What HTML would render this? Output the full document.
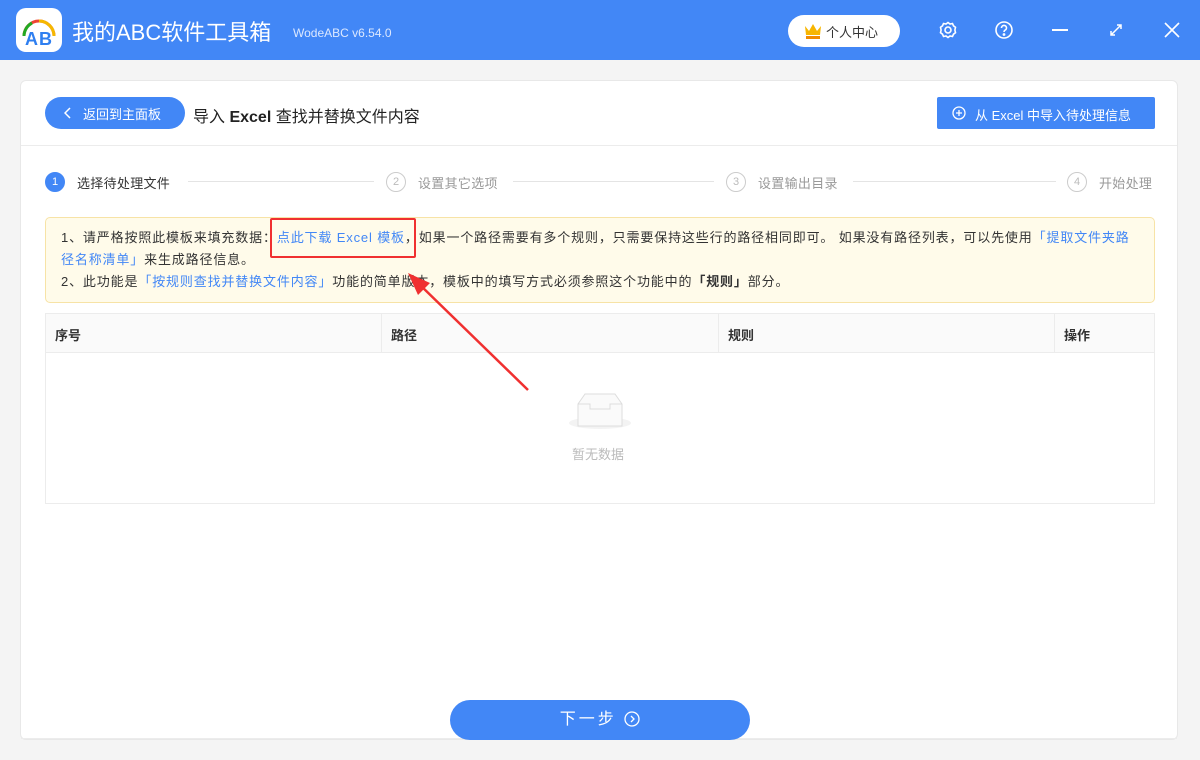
<!DOCTYPE html>
<html><head><meta charset="utf-8"><style>
*{margin:0;padding:0;box-sizing:border-box}
body{width:1200px;height:760px;overflow:hidden;background:#f4f4f4;font-family:"Liberation Sans","Noto Sans CJK SC",sans-serif;font-size:13px;color:#333;position:relative}
.top{position:absolute;left:0;top:0;width:1200px;height:60px;background:#4287f6}
.logo{position:absolute;left:16px;top:8px;width:46px;height:44px;background:#fff;border-radius:10px}
.ttl{position:absolute;left:72px;top:15px;color:#fff;font-size:22px}
.ver{position:absolute;left:293px;top:26px;color:#dce8ff;font-size:12px}
.pc{position:absolute;left:788px;top:15px;width:112px;height:32px;background:#fff;border-radius:16px;font-size:13px;color:#333;padding:7px 0 0 38px}
.card{position:absolute;left:20px;top:80px;width:1158px;height:660px;background:#fff;border:1px solid #e8e8e8;border-radius:6px}
.abs{position:absolute}
.back{left:45px;top:97px;width:140px;height:32px;background:#4287f6;border-radius:16px;color:#fff;font-size:13px;padding:7px 0 0 38px}
.imp{left:937px;top:97px;width:218px;height:32px;background:#4287f6;border-radius:2px;color:#fff;font-size:13px;padding:8px 0 0 38px}
.step{top:173px;font-size:13px;color:#999;letter-spacing:0.3px}
.circ{position:absolute;width:20px;height:20px;border-radius:50%;border:1px solid #ccc;color:#bbb;font-size:11px;text-align:center;line-height:18px;top:172px}
.ln{position:absolute;top:181px;height:1px;background:#e4e4e4}
.note{left:45px;top:217px;width:1110px;height:86px;background:#fffbea;border:1px solid #f7e3a6;border-radius:5px;padding:9px 10px 9px 15px;font-size:13px;line-height:22px;color:#333;letter-spacing:0.85px;white-space:nowrap}
.b{color:#4287f6}
.tbl{left:45px;top:313px;width:1110px;height:191px;border:1px solid #ececec}
.th{position:absolute;top:0;height:39px;background:#fafafa;border-bottom:1px solid #ececec;font-weight:bold;font-size:13px;padding:11px 9px}
</style></head><body>
<div class="top"></div>
<div class="logo"><svg width="46" height="44" viewBox="0 0 46 44"><path d="M8 28 A15 15 0 0 1 38 28" fill="none" stroke="#e43" stroke-width="3"/><path d="M23 13 A15 15 0 0 1 38 28" fill="none" stroke="#f5b800" stroke-width="3"/><path d="M8 28 A15 15 0 0 1 16 15" fill="none" stroke="#2a2" stroke-width="3"/><text x="9" y="37" font-size="18" font-weight="bold" fill="#2f7ff0" font-family="Liberation Sans">A</text><text x="23" y="37" font-size="18" font-weight="bold" fill="#2f7ff0" font-family="Liberation Sans">B</text></svg></div>
<div class="ttl">我的ABC软件工具箱</div>
<div class="ver">WodeABC v6.54.0</div>
<div class="pc"><svg class="abs" style="left:16px;top:8px" width="18" height="16" viewBox="0 0 18 16"><path d="M1 3 L5 8 L9 1 L13 8 L17 3 L16 12 L2 12Z" fill="#f7b500"/><rect x="2" y="13" width="14" height="3" fill="#f08a00"/></svg>个人中心</div>
<svg class="abs" style="left:938px;top:20px" width="20" height="20" viewBox="0 0 20 20" fill="none" stroke="#fff" stroke-width="1.6"><circle cx="10" cy="10" r="3"/><path d="M10 2.5l2 1.5 2.5-.5 1 2.3 2 1.5-.6 2.7.6 2.7-2 1.5-1 2.3-2.5-.5-2 1.5-2-1.5-2.5.5-1-2.3-2-1.5.6-2.7-.6-2.7 2-1.5 1-2.3 2.5.5z"/></svg>
<svg class="abs" style="left:994px;top:20px" width="20" height="20" viewBox="0 0 20 20" fill="none" stroke="#fff" stroke-width="1.6"><circle cx="10" cy="10" r="8"/><path d="M7.5 8a2.5 2.5 0 1 1 3.5 2.2c-.7.4-1 .9-1 1.8"/><circle cx="10" cy="14.5" r=".6" fill="#fff"/></svg>
<div class="abs" style="left:1052px;top:29px;width:16px;height:2px;background:#fff"></div>
<svg class="abs" style="left:1108px;top:22px" width="16" height="16" viewBox="0 0 16 16" stroke="#fff" stroke-width="1.5" fill="none"><path d="M3 13L13 3M9 3h4v4M3 9v4h4"/></svg>
<svg class="abs" style="left:1164px;top:22px" width="16" height="16" viewBox="0 0 16 16" stroke="#fff" stroke-width="1.6"><path d="M1 1L15 15M15 1L1 15"/></svg>
<div class="card"></div>
<div class="abs back"><svg class="abs" style="left:19px;top:10px" width="8" height="12" viewBox="0 0 8 12" fill="none" stroke="#fff" stroke-width="1.5"><path d="M6 1L1 6l5 5"/></svg>返回到主面板</div>
<div class="abs" style="left:193px;top:103px;font-size:16px;color:#222">导入 <b>Excel</b> 查找并替换文件内容</div>
<div class="abs imp"><svg class="abs" style="left:15px;top:9px" width="14" height="14" viewBox="0 0 14 14" fill="none" stroke="#fff" stroke-width="1.3"><circle cx="7" cy="7" r="6"/><path d="M7 4v6M4 7h6"/></svg>从 Excel 中导入待处理信息</div>
<div class="abs" style="left:21px;top:145px;width:1156px;height:1px;background:#ececec"></div>
<div class="circ" style="left:45px;background:#4287f6;border-color:#4287f6;color:#fff">1</div>
<div class="abs step" style="left:77px;color:#333">选择待处理文件</div>
<div class="ln" style="left:188px;width:186px"></div>
<div class="circ" style="left:386px">2</div>
<div class="abs step" style="left:418px">设置其它选项</div>
<div class="ln" style="left:513px;width:201px"></div>
<div class="circ" style="left:726px">3</div>
<div class="abs step" style="left:758px">设置输出目录</div>
<div class="ln" style="left:853px;width:203px"></div>
<div class="circ" style="left:1067px">4</div>
<div class="abs step" style="left:1099px">开始处理</div>
<div class="abs note">1、请严格按照此模板来填充数据：<span class="b">点此下载 Excel 模板</span>，如果一个路径需要有多个规则，只需要保持这些行的路径相同即可。 如果没有路径列表，可以先使用<span class="b">「提取文件夹路<br>径名称清单」</span>来生成路径信息。<br>2、此功能是<span class="b">「按规则查找并替换文件内容」</span>功能的简单版本，模板中的填写方式必须参照这个功能中的<b>「规则」</b>部分。</div>
<div class="abs" style="left:270px;top:218px;width:146px;height:40px;border:2px solid #f03030;border-radius:2px"></div>
<div class="abs tbl">
<div class="th" style="left:0;width:336px;border-right:1px solid #ececec">序号</div>
<div class="th" style="left:336px;width:337px;border-right:1px solid #ececec">路径</div>
<div class="th" style="left:673px;width:336px;border-right:1px solid #ececec">规则</div>
<div class="th" style="left:1009px;width:99px">操作</div>
</div>
<svg class="abs" style="left:568px;top:392px" width="66" height="40" viewBox="0 0 66 40"><ellipse cx="32" cy="31" rx="31" ry="6" fill="#f3f3f3"/><path d="M10 12 L17 2 H47 L54 12 V34 H10Z" fill="#fafafa" stroke="#ddd"/><path d="M10 12 H22 V17 H42 V12 H54" fill="none" stroke="#ddd"/></svg>
<div class="abs" style="left:572px;top:444px;color:#bbb;font-size:13px">暂无数据</div>
<svg class="abs" style="left:400px;top:265px" width="140" height="130"><line x1="128" y1="125" x2="18" y2="18" stroke="#f03030" stroke-width="2.5"/><path d="M8 8 L30 18 L18 30Z" fill="#f03030"/></svg>
<div class="abs" style="left:21px;top:738px;width:1156px;height:1px;background:#ececec"></div>
<div class="abs" style="left:450px;top:700px;width:300px;height:40px;background:#4287f6;border-radius:20px;color:#fff;font-size:16px;text-align:center;line-height:40px;letter-spacing:3px">下一步 <svg style="vertical-align:-3px" width="16" height="16" viewBox="0 0 16 16" fill="none" stroke="#fff" stroke-width="1.3"><circle cx="8" cy="8" r="7"/><path d="M7 5l3 3-3 3"/></svg></div>
</body></html>
